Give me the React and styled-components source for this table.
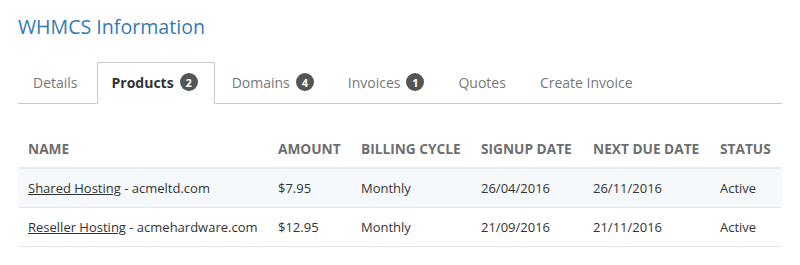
import React, { useState } from 'react';
import styled, { createGlobalStyle } from 'styled-components';

const GlobalStyle = createGlobalStyle`
	body {
		margin: 0;
		background: #fff;
		font-family: 'Open Sans', 'Liberation Sans', sans-serif;
		color: #333;
	}
`;

const Page = styled.div`
	padding: 13px 18px 0;
	width: 764px;
`;

const Title = styled.h2`
	margin: 0 0 21px;
	font-size: 19.6px;
	font-weight: 400;
	line-height: 28px;
	color: #337ab7;
`;

const TabBar = styled.ul`
	display: flex;
	list-style: none;
	margin: 0;
	padding: 0;
	border-bottom: 1px solid #c8c8c8;
`;

const Tab = styled.li`
	display: flex;
	align-items: center;
	gap: 6px;
	height: 42px;
	box-sizing: border-box;
	padding: 0 16px 2px 14px;
	margin: 0 2px -1px 0;
	font-size: 14px;
	font-weight: ${(p) => (p.$active ? 700 : 400)};
	color: ${(p) => (p.$active ? '#333' : '#777')};
	border: 1px solid ${(p) => (p.$active ? '#c8c8c8' : 'transparent')};
	border-bottom-color: ${(p) => (p.$active ? '#fff' : 'transparent')};
	background: ${(p) => (p.$active ? '#fff' : 'transparent')};
	cursor: pointer;
`;

const Badge = styled.span`
	display: inline-flex;
	align-items: center;
	justify-content: center;
	min-width: 18px;
	height: 18px;
	padding: 0 5px;
	box-sizing: border-box;
	border-radius: 9px;
	background: #555;
	color: #fff;
	font-size: 11px;
	font-weight: 700;
`;

const Table = styled.table`
	width: 100%;
	margin-top: 35px;
	border-collapse: collapse;
	font-size: 13px;
	table-layout: fixed;
`;

const Th = styled.th`
	width: ${(p) => p.$w}px;
	padding: 0 10px 9px;
	text-align: left;
	font-size: 13.7px;
	font-weight: 700;
	text-transform: uppercase;
	color: #6e6e6e;
	border-bottom: 2px solid #ececec;
	white-space: nowrap;
`;

const Row = styled.tr`
	background: ${(p) => (p.$striped ? '#f5f9fc' : '#fff')};
	border-bottom: 1px solid #e6e6e6;
`;

const Td = styled.td`
	height: 38px;
	padding: 0 10px;
	color: #333;
	white-space: nowrap;
`;

const Link = styled.a`
	color: #333;
	text-decoration: underline;
`;

const tabs = [
	{ label: 'Details' },
	{ label: 'Products', count: 2 },
	{ label: 'Domains', count: 4 },
	{ label: 'Invoices', count: 1 },
	{ label: 'Quotes' },
	{ label: 'Create Invoice' },
];

const columns = [
	{ label: 'Name', w: 230 },
	{ label: 'Amount', w: 63 },
	{ label: 'Billing Cycle', w: 100 },
	{ label: 'Signup Date', w: 92 },
	{ label: 'Next Due Date', w: 107 },
	{ label: 'Status', w: 52 },
];

const products = [
	{ name: 'Shared Hosting', domain: 'acmeltd.com', amount: '$7.95', cycle: 'Monthly', signup: '26/04/2016', due: '26/11/2016', status: 'Active' },
	{ name: 'Reseller Hosting', domain: 'acmehardware.com', amount: '$12.95', cycle: 'Monthly', signup: '21/09/2016', due: '21/11/2016', status: 'Active' },
];

const App = () => {
	const [active, setActive] = useState('Products');

	return (
		<Page>
			<GlobalStyle />
			<Title>WHMCS Information</Title>
			<TabBar>
				{tabs.map((t) => (
					<Tab key={t.label} $active={active === t.label} onClick={() => setActive(t.label)}>
						{t.label}
						{t.count && <Badge>{t.count}</Badge>}
					</Tab>
				))}
			</TabBar>
			<Table>
				<thead>
					<tr>
						{columns.map((c) => (
							<Th key={c.label} $w={c.w}>{c.label}</Th>
						))}
					</tr>
				</thead>
				<tbody>
					{products.map((p, i) => (
						<Row key={p.name} $striped={i % 2 === 0}>
							<Td>
								<Link href="#">{p.name}</Link> - {p.domain}
							</Td>
							<Td>{p.amount}</Td>
							<Td>{p.cycle}</Td>
							<Td>{p.signup}</Td>
							<Td>{p.due}</Td>
							<Td>{p.status}</Td>
						</Row>
					))}
				</tbody>
			</Table>
		</Page>
	);
};

export default App;
